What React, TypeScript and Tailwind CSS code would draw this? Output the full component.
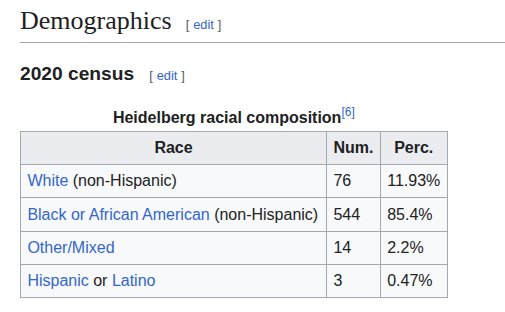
import React from "react";

const link = "text-[#3366cc]";

function Edit({ className = "" }: { className?: string }) {
  return (
    <span className={`text-[12.8px] text-[#54595d] font-normal whitespace-nowrap ${className}`} style={{ fontFamily: '"Liberation Sans", Arial, sans-serif' }}>
      [<span className="ml-[4px] mr-[4px] text-[#3366cc]">edit</span>]
    </span>
  );
}

const rows: { race: React.ReactNode; num: string; perc: string }[] = [
  { race: (<><span className={link}>White</span> (non-Hispanic)</>), num: "76", perc: "11.93%" },
  { race: (<><span className={link}>Black or African American</span> (non-Hispanic)</>), num: "544", perc: "85.4%" },
  { race: (<span className={link}>Other/Mixed</span>), num: "14", perc: "2.2%" },
  { race: (<><span className={link}>Hispanic</span> or <span className={link}>Latino</span></>), num: "3", perc: "0.47%" },
];

export default function App() {
  return (
    <div className="w-[505px] h-[312px] bg-white overflow-hidden pl-[20px] text-[#202122]" style={{ fontFamily: '"Liberation Sans", Arial, sans-serif' }}>
      <div className="pt-[4px] pb-[4px] border-b border-[#a2a9b1] flex items-baseline">
        <h2 className="text-[26px] leading-[34px] font-normal text-[#202122]" style={{ fontFamily: '"Liberation Serif", "Times New Roman", serif' }}>
          Demographics
        </h2>
        <Edit className="ml-[14px]" />
      </div>
      <div className="mt-[19px] flex items-baseline">
        <h3 className="text-[19.2px] leading-[24px] font-bold">2020 census</h3>
        <Edit className="ml-[15px]" />
      </div>
      <table className="mt-[19px] border-collapse text-[16px] leading-[1.6] bg-[#f8f9fa]">
        <caption className="font-bold text-[16px] leading-[25.6px]">
          Heidelberg racial composition
          <sup className="text-[12px] font-normal text-[#3366cc] leading-none relative top-[-1px] align-super">[6]</sup>
        </caption>
        <thead>
          <tr className="bg-[#eaecf0]">
            <th className="w-[306px] border border-[#a2a9b1] px-[6.4px] py-[3.4px] font-bold text-center">Race</th>
            <th className="border border-[#a2a9b1] px-[6.4px] py-[3.4px] font-bold text-center">Num.</th>
            <th className="border border-[#a2a9b1] px-[6.4px] py-[3.4px] font-bold text-center">Perc.</th>
          </tr>
        </thead>
        <tbody>
          {rows.map((r, i) => (
            <tr key={i}>
              <td className="border border-[#a2a9b1] px-[6.4px] py-[3.4px] whitespace-nowrap">{r.race}</td>
              <td className="border border-[#a2a9b1] px-[6.4px] py-[3.4px]">{r.num}</td>
              <td className="border border-[#a2a9b1] px-[6.4px] py-[3.4px]">{r.perc}</td>
            </tr>
          ))}
        </tbody>
      </table>
    </div>
  );
}
